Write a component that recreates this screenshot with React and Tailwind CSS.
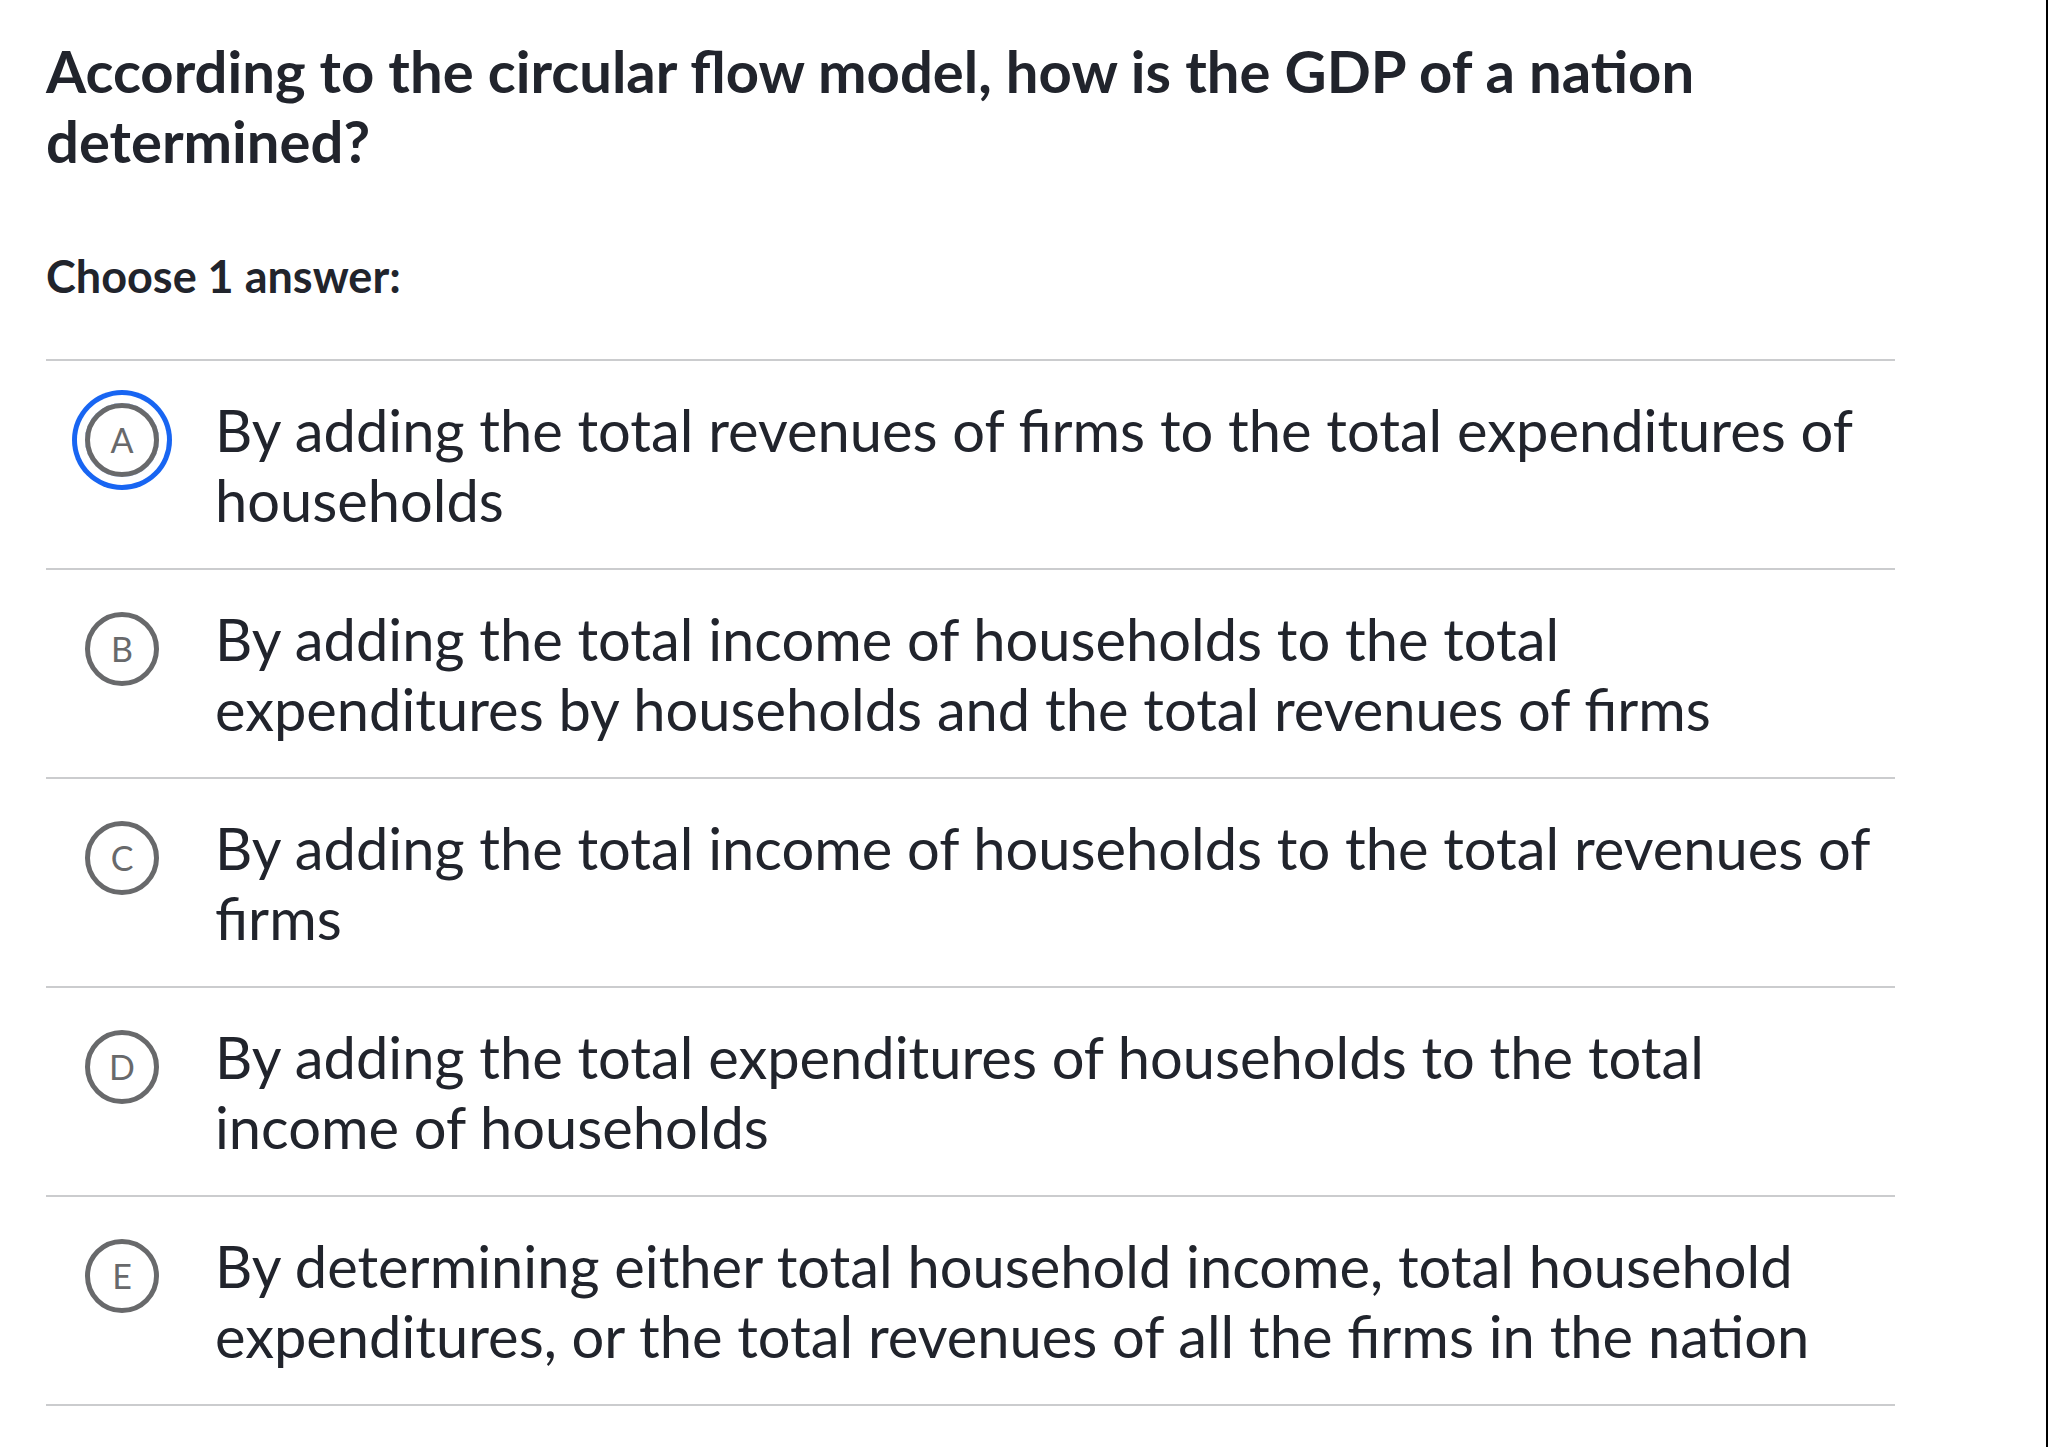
import React from 'react';

const choices = [
  { letter: 'A', text: 'By adding the total revenues of firms to the total expenditures of households', selected: true },
  { letter: 'B', text: 'By adding the total income of households to the total expenditures by households and the total revenues of firms' },
  { letter: 'C', text: 'By adding the total income of households to the total revenues of firms' },
  { letter: 'D', text: 'By adding the total expenditures of households to the total income of households' },
  { letter: 'E', text: 'By determining either total household income, total household expenditures, or the total revenues of all the firms in the nation' },
];

const Choice = ({ letter, text, selected }) => (
  <li className="flex items-start border-t-2 border-[#cbccce] pt-[34px] pb-[33px] pl-[39px]">
    <div className="flex h-[70px] shrink-0 items-center pt-[19px]">
      <span
        className={`flex h-[74px] w-[74px] items-center justify-center rounded-full border-[5px] border-[#68696b] text-[34px] leading-none text-[#68696b] ${
          selected ? 'ring-[5px] ring-[#1865f2] ring-offset-[8px]' : ''
        }`}
      >
        {letter}
      </span>
    </div>
    <p className="ml-[56px] text-[57.8px] leading-[70px] text-[#21242c]">{text}</p>
  </li>
);

export default function App() {
  return (
    <div className="min-h-screen border-r-2 border-black bg-white font-['Lato',sans-serif]">
      <div className="w-[1895px] pl-[46px] pt-[36px]">
        <h1 className="text-[58px] font-bold leading-[70px] text-[#21242c]">
          According to the circular flow model, how is the GDP of a nation determined?
        </h1>
        <p className="mt-[73px] text-[45px] font-bold leading-[54px] text-[#21242c]">Choose 1 answer:</p>
        <ul className="mt-[56px] border-b-2 border-[#cbccce]">
          {choices.map((c) => (
            <Choice key={c.letter} {...c} />
          ))}
        </ul>
      </div>
    </div>
  );
}
